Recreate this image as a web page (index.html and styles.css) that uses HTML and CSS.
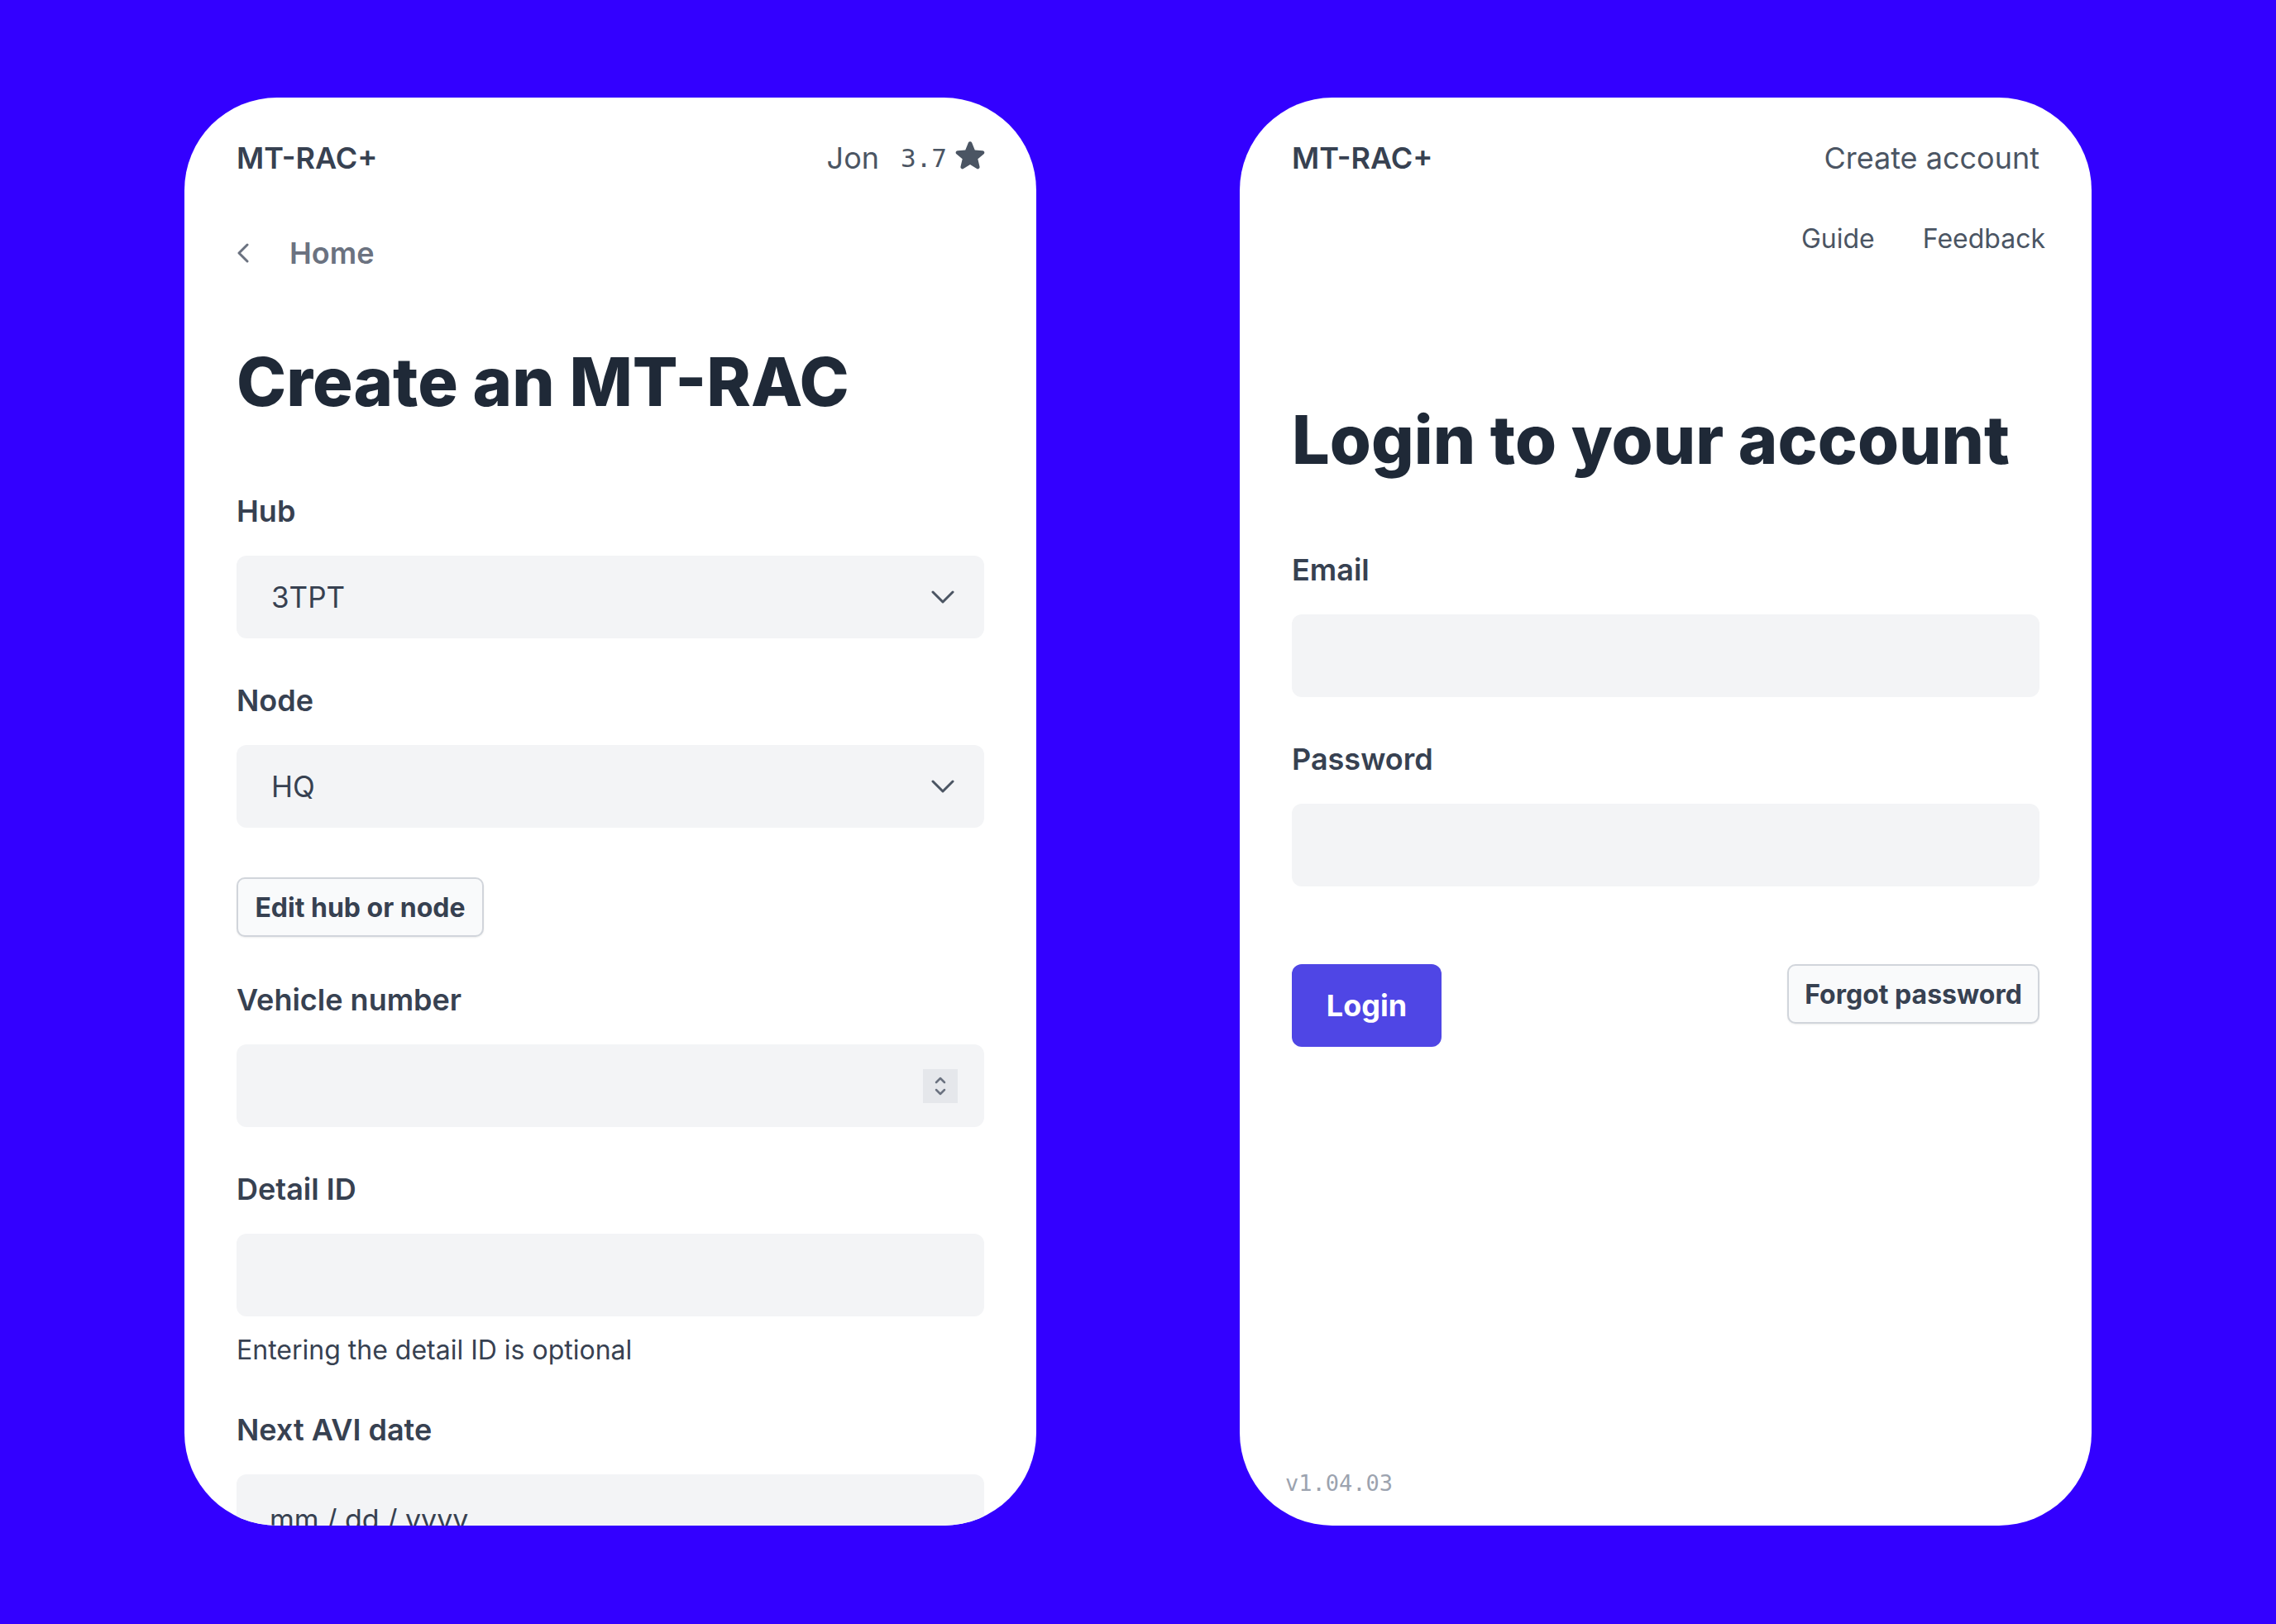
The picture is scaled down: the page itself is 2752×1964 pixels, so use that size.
FILE: index.html
```html
<!DOCTYPE html>
<html lang="en">
<head>
    <meta charset="UTF-8">
    <meta name="viewport" content="width=device-width, initial-scale=1.0">
    <title>MT-RAC+</title>
    <link rel="stylesheet" href="styles.css">
</head>
<body>
    <div class="screens">
        <!-- create screen -->
        <div class="card">
            <div class="topbar">
                <span class="brand">MT-RAC+</span>
                <span class="user">
                    <span class="user-name">Jon</span>
                    <span class="user-rating">3.7</span>
                    <svg class="star" viewBox="0 0 24 24" width="42" height="42">
                        <path fill="#4b5563" d="M10.788 3.21c.448-1.077 1.976-1.077 2.424 0l2.082 5.007 5.404.433c1.164.093 1.636 1.545.749 2.305l-4.117 3.527 1.257 5.273c.271 1.136-.964 2.033-1.96 1.425L12 18.354 7.373 21.180c-.996.608-2.231-.29-1.960-1.425l1.257-5.273-4.117-3.527c-.887-.76-.415-2.212.749-2.305l5.404-.433 2.082-5.006z"/>
                    </svg>
                </span>
            </div>

            <a class="back-link" href="#">
                <svg viewBox="0 0 16 24" width="16" height="24">
                    <polyline points="13,2 3,12 13,22" fill="none" stroke="#6b7280" stroke-width="3" stroke-linecap="round" stroke-linejoin="round"/>
                </svg>
                <span>Home</span>
            </a>

            <h1 class="title">Create an MT-RAC</h1>

            <div class="group">
                <label class="label">Hub</label>
                <div class="field select">
                    <span>3TPT</span>
                    <svg viewBox="0 0 28 16" width="28" height="16">
                        <polyline points="2,2 14,14 26,2" fill="none" stroke="#4b5563" stroke-width="3" stroke-linecap="round" stroke-linejoin="round"/>
                    </svg>
                </div>
            </div>

            <div class="group">
                <label class="label">Node</label>
                <div class="field select">
                    <span>HQ</span>
                    <svg viewBox="0 0 28 16" width="28" height="16">
                        <polyline points="2,2 14,14 26,2" fill="none" stroke="#4b5563" stroke-width="3" stroke-linecap="round" stroke-linejoin="round"/>
                    </svg>
                </div>
            </div>

            <button class="btn-outline edit-btn">Edit hub or node</button>

            <div class="group">
                <label class="label">Vehicle number</label>
                <div class="field number">
                    <span class="spinner">
                        <svg viewBox="0 0 42 41" width="42" height="41">
                            <polyline points="16,16 21,11 26,16" fill="none" stroke="#6b7280" stroke-width="2.5" stroke-linecap="round" stroke-linejoin="round"/>
                            <polyline points="16,25 21,30 26,25" fill="none" stroke="#6b7280" stroke-width="2.5" stroke-linecap="round" stroke-linejoin="round"/>
                        </svg>
                    </span>
                </div>
            </div>

            <div class="group group-tight">
                <label class="label">Detail ID</label>
                <div class="field"></div>
                <p class="hint">Entering the detail ID is optional</p>
            </div>

            <div class="group">
                <label class="label">Next AVI date</label>
                <div class="field date"><span>mm / dd / yyyy</span></div>
            </div>
        </div>

        <!-- login screen -->
        <div class="card">
            <div class="topbar">
                <span class="brand">MT-RAC+</span>
                <a class="top-link" href="#">Create account</a>
            </div>

            <nav class="subnav">
                <a href="#">Guide</a>
                <a href="#">Feedback</a>
            </nav>

            <h1 class="title login-title">Login to your account</h1>

            <div class="group">
                <label class="label">Email</label>
                <div class="field"></div>
            </div>

            <div class="group">
                <label class="label">Password</label>
                <div class="field"></div>
            </div>

            <div class="actions">
                <button class="btn-primary">Login</button>
                <button class="btn-outline">Forgot password</button>
            </div>

            <div class="version">v1.04.03</div>
        </div>
    </div>
</body>
</html>
```

FILE: styles.css
```css
body {
    margin: 0;
    background-color: #3300ff;
    font-family: Inter, "Noto Sans", sans-serif;
    color: #374151;
}

.screens {
    display: flex;
    justify-content: center;
    gap: 246px;
    padding-top: 118px;
    height: 1846px;
}

.card {
    width: 1030px;
    height: 1727px;
    box-sizing: border-box;
    background-color: #fff;
    border-radius: 112px;
    padding: 46px 63px 31px;
    overflow: hidden;
    display: flex;
    flex-direction: column;
}

.card > * {
    flex-shrink: 0;
}

.topbar {
    display: flex;
    justify-content: space-between;
    align-items: baseline;
    height: 54px;
    line-height: 54px;
}

.brand {
    font-size: 36px;
    font-weight: 600;
    color: #374151;
}

.user {
    display: flex;
    align-items: center;
    color: #4b5563;
    margin-right: -4px;
}

.user-name {
    font-size: 36px;
}

.user-rating {
    font-family: "DejaVu Sans Mono", monospace;
    font-size: 31px;
    margin-left: 26px;
    margin-right: 7px;
}

.star {
    margin-top: -6px;
}

.top-link {
    font-size: 36px;
    color: #4b5563;
    text-decoration: none;
}

.back-link {
    display: flex;
    align-items: center;
    gap: 48px;
    margin-top: 61px;
    height: 54px;
    font-size: 36px;
    font-weight: 600;
    color: #6b7280;
    text-decoration: none;
}

.title {
    margin: 89px 0 88px;
    font-size: 81px;
    line-height: 1;
    font-weight: 800;
    letter-spacing: 0;
    color: #1f2937;
}

.login-title {
    margin-top: 179px;
    margin-bottom: 89px;
}

.subnav {
    display: flex;
    justify-content: flex-end;
    gap: 58px;
    margin-top: 47px;
    margin-right: -7px;
    line-height: 48px;
}

.subnav a {
    font-size: 32px;
    color: #4b5563;
    text-decoration: none;
}

.group {
    display: flex;
    flex-direction: column;
    margin-bottom: 48px;
}

.label {
    font-size: 36px;
    line-height: 54px;
    font-weight: 600;
    color: #374151;
    margin-bottom: 27px;
}

.field {
    height: 100px;
    flex-shrink: 0;
    background-color: #f3f4f6;
    border-radius: 12px;
    box-sizing: border-box;
    font-size: 35px;
    color: #374151;
}

.select {
    display: flex;
    justify-content: space-between;
    align-items: center;
    padding: 0 36px 0 42px;
}

.number {
    position: relative;
}

.spinner {
    position: absolute;
    right: 32px;
    top: 30px;
    width: 42px;
    height: 41px;
    background-color: #e5e7eb;
}

.spinner svg {
    display: block;
}

.date {
    display: flex;
    align-items: center;
    padding-left: 40px;
    padding-top: 8px;
    font-size: 34px;
}

.hint {
    margin: 18px 0 0;
    font-size: 32px;
    line-height: 45px;
    color: #374151;
}

.group-tight {
    margin-bottom: 47px;
}

.btn-outline {
    font-family: inherit;
    font-size: 32px;
    font-weight: 700;
    color: #374151;
    background-color: #f9fafb;
    border: 2.5px solid #d1d5db;
    border-radius: 10px;
    height: 72px;
    padding: 0 19px;
    box-shadow: 0 1px 2px rgba(0, 0, 0, 0.08);
    cursor: pointer;
}

.edit-btn {
    align-self: flex-start;
    width: 299px;
    margin-top: 12px;
    margin-bottom: 49px;
}

.actions {
    display: flex;
    justify-content: space-between;
    align-items: flex-start;
    margin-top: 46px;
}

.actions .btn-outline {
    width: 305px;
}

.btn-primary {
    font-family: inherit;
    font-size: 36px;
    font-weight: 700;
    color: #fff;
    background-color: #4f46e5;
    border: none;
    border-radius: 12px;
    height: 100px;
    width: 181px;
    cursor: pointer;
}

.version {
    margin-top: auto;
    margin-left: -8px;
    font-family: "DejaVu Sans Mono", monospace;
    font-size: 27px;
    line-height: 40px;
    color: #9ca3af;
}
```
